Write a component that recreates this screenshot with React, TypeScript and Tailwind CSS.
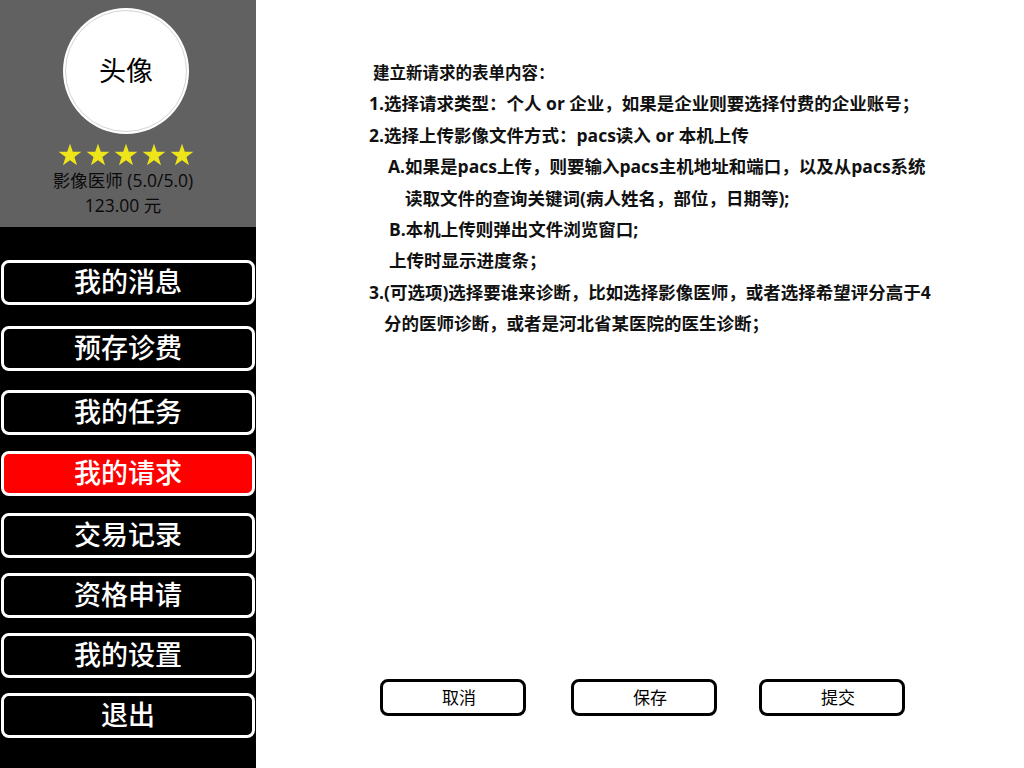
import React from 'react'

const font = { fontFamily: '"Open Sans", "Noto Sans CJK SC", sans-serif' }

const menu = [
  { label: '我的消息', mt: 'mt-[33px]' },
  { label: '预存诊费', mt: 'mt-[21px]' },
  { label: '我的任务', mt: 'mt-[19px]' },
  { label: '我的请求', mt: 'mt-[16px]', active: true },
  { label: '交易记录', mt: 'mt-[17px]' },
  { label: '资格申请', mt: 'mt-[15px]' },
  { label: '我的设置', mt: 'mt-[15px]' },
  { label: '退出', mt: 'mt-[15px]' },
]

function Star() {
  return (
    <svg width="26" height="26" viewBox="0 0 24 24">
      <polygon
        points="12,1.5 14.6,9 22.5,9 16.1,13.8 18.5,21.5 12,16.8 5.5,21.5 7.9,13.8 1.5,9 9.4,9"
        fill="#eee41a"
      />
    </svg>
  )
}

const lines = [
  { text: '建立新请求的表单内容：', pl: 'pl-[4px]', size: 'text-[16.5px]' },
  { text: '1.选择请求类型：个人 or 企业，如果是企业则要选择付费的企业账号；', pl: 'pl-0', size: 'text-[17.5px]' },
  { text: '2.选择上传影像文件方式：pacs读入 or 本机上传', pl: 'pl-0', size: 'text-[17.5px]' },
  { text: 'A.如果是pacs上传，则要输入pacs主机地址和端口，以及从pacs系统', pl: 'pl-[19px]', size: 'text-[17.5px]' },
  { text: '读取文件的查询关键词(病人姓名，部位，日期等);', pl: 'pl-[36px]', size: 'text-[17.5px]' },
  { text: 'B.本机上传则弹出文件浏览窗口;', pl: 'pl-[20px]', size: 'text-[17.5px]' },
  { text: '上传时显示进度条；', pl: 'pl-[20px]', size: 'text-[17.5px]' },
  { text: '3.(可选项)选择要谁来诊断，比如选择影像医师，或者选择希望评分高于4', pl: 'pl-0', size: 'text-[17.5px]' },
  { text: '分的医师诊断，或者是河北省某医院的医生诊断；', pl: 'pl-[15px]', size: 'text-[17.5px]' },
]

export default function App() {
  return (
    <div className="flex w-[1024px] h-[768px] bg-white overflow-hidden" style={font}>
      <aside className="w-[256px] h-full bg-black flex flex-col">
        <div className="h-[227px] bg-[#616161] flex flex-col items-center pt-[8px] pr-[4px]">
          <div className="w-[126px] h-[126px] rounded-full bg-white p-[2px]">
            <div className="w-full h-full rounded-full border border-[#d4d4d4] flex items-center justify-center text-[27px] text-black">
              头像
            </div>
          </div>
          <div className="flex gap-[2px] mt-[8px]">
            <Star />
            <Star />
            <Star />
            <Star />
            <Star />
          </div>
          <div className="text-[17.5px] text-[#0a0a0a] leading-[22px] mt-[1px] mr-[6px]">影像医师 (5.0/5.0)</div>
          <div className="text-[17.5px] text-[#0a0a0a] leading-[22px] mt-[3px] mr-[6px]">123.00 元</div>
        </div>
        {menu.map((m) => (
          <div
            key={m.label}
            className={`${m.mt} mx-[1px] h-[45px] rounded-[8px] border-[3px] border-white flex items-center justify-center text-white text-[27px] font-medium ${
              m.active ? 'bg-[#ff0000]' : 'bg-black'
            }`}
          >
            {m.label}
          </div>
        ))}
      </aside>
      <main className="flex-1 flex flex-col">
        <div className="pt-[57px] pl-[113px] font-bold text-[#111] leading-[31.4px]">
          {lines.map((l) => (
            <div key={l.text} className={`${l.pl} ${l.size} whitespace-nowrap`}>
              {l.text}
            </div>
          ))}
        </div>
        <div className="mt-auto mb-[52px] ml-[124px] flex">
          <button className="w-[146px] h-[37px] pl-[12px] rounded-[8px] border-[3px] border-black text-[17px] text-black bg-white">
            取消
          </button>
          <button className="ml-[45px] w-[146px] h-[37px] pl-[12px] rounded-[8px] border-[3px] border-black text-[17px] text-black bg-white">
            保存
          </button>
          <button className="ml-[42px] w-[146px] h-[37px] pl-[12px] rounded-[8px] border-[3px] border-black text-[17px] text-black bg-white">
            提交
          </button>
        </div>
      </main>
    </div>
  )
}
